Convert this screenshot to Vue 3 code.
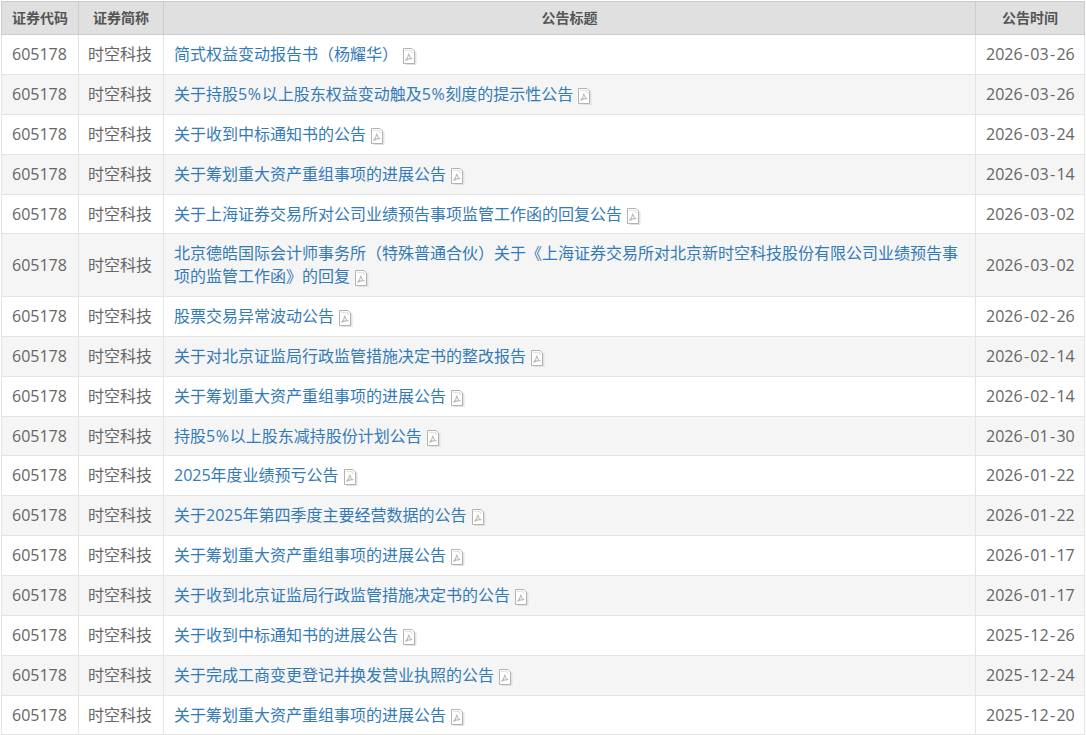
<script setup>
const rows = [
  ['简式权益变动报告书（杨耀华）', '2026-03-26'],
  ['关于持股5%以上股东权益变动触及5%刻度的提示性公告', '2026-03-26'],
  ['关于收到中标通知书的公告', '2026-03-24'],
  ['关于筹划重大资产重组事项的进展公告', '2026-03-14'],
  ['关于上海证券交易所对公司业绩预告事项监管工作函的回复公告', '2026-03-02'],
  ['北京德皓国际会计师事务所（特殊普通合伙）关于《上海证券交易所对北京新时空科技股份有限公司业绩预告事项的监管工作函》的回复', '2026-03-02'],
  ['股票交易异常波动公告', '2026-02-26'],
  ['关于对北京证监局行政监管措施决定书的整改报告', '2026-02-14'],
  ['关于筹划重大资产重组事项的进展公告', '2026-02-14'],
  ['持股5%以上股东减持股份计划公告', '2026-01-30'],
  ['2025年度业绩预亏公告', '2026-01-22'],
  ['关于2025年第四季度主要经营数据的公告', '2026-01-22'],
  ['关于筹划重大资产重组事项的进展公告', '2026-01-17'],
  ['关于收到北京证监局行政监管措施决定书的公告', '2026-01-17'],
  ['关于收到中标通知书的进展公告', '2025-12-26'],
  ['关于完成工商变更登记并换发营业执照的公告', '2025-12-24'],
  ['关于筹划重大资产重组事项的进展公告', '2025-12-20'],
]
const pieces = (s, mark) => s.split(new RegExp('(' + mark + ')'))
</script>

<template>
  <div class="page">
    <table class="list">
      <colgroup>
        <col class="c1" /><col class="c2" /><col /><col class="c4" />
      </colgroup>
      <thead>
        <tr>
          <th>证券代码</th>
          <th>证券简称</th>
          <th>公告标题</th>
          <th>公告时间</th>
        </tr>
      </thead>
      <tbody>
        <tr v-for="(r, i) in rows" :key="i">
          <td>605178</td>
          <td class="name">时空科技</td>
          <td>
            <a class="link"><template v-for="(p, k) in pieces(r[0], '%')" :key="k"><span v-if="p === '%'" class="pct">%</span><template v-else>{{ p }}</template></template></a>
            <svg class="pdf" width="15" height="17" viewBox="0 0 15 17">
              <path d="M13.5 3.5V16.5H3.5" fill="none" stroke="#e2e2e2" stroke-width="2" />
              <path d="M1.5 .5H10L12.5 3V15.5H1.5Z" fill="#fff" stroke="#b2b2b2" />
              <path d="M3 2.5H9.5V4.5H11" fill="none" stroke="#e2e2e2" />
              <path d="M6.8 5.5C6.6 8 5.6 10.5 3.5 12.5M6.8 5.5C7.2 8 8.2 10 10.5 10.8M3.5 12.5C5.5 11 8 10.4 10.5 10.8" fill="none" stroke="#bcbcbc" stroke-width="1.1" />
            </svg>
          </td>
          <td class="date"><template v-for="(p, k) in pieces(r[1], '-')" :key="k"><span v-if="p === '-'" class="hy">-</span><template v-else>{{ p }}</template></template></td>
        </tr>
      </tbody>
    </table>
  </div>
</template>

<style>
body { background: #fff; }
</style>

<style scoped>
.page {
  padding: 1px 0 0 1px;
  width: 1085px;
  height: 734px;
  overflow: hidden;
  font-family: "Open Sans", "Noto Sans CJK SC", sans-serif;
  color: #666;
}
.list {
  width: 1084px;
  border-collapse: collapse;
  table-layout: fixed;
}
.c1 { width: 77px; }
.c2 { width: 85px; }
.c4 { width: 109px; }
th {
  height: 32.2px;
  padding: 0;
  background: #e0e0e0;
  border: 1px solid #ccc;
  font-size: 14px;
  line-height: 20px;
  font-weight: 700;
  color: #555;
  text-align: center;
}
td {
  padding: 8px 10px;
  border: 1px solid #e4e4e4;
  font-size: 16px;
  line-height: 1.42857;
}
td.name { padding-left: 9px; padding-right: 9px; }
td.date { white-space: nowrap; }
tbody tr:nth-child(even) td { background: #f5f5f5; }
.link { color: #337ab7; }
.pct { margin: 0 .65px; }
.hy { margin: 0 1.3px; }
.pdf { vertical-align: -5px; margin-left: 4px; }
</style>
